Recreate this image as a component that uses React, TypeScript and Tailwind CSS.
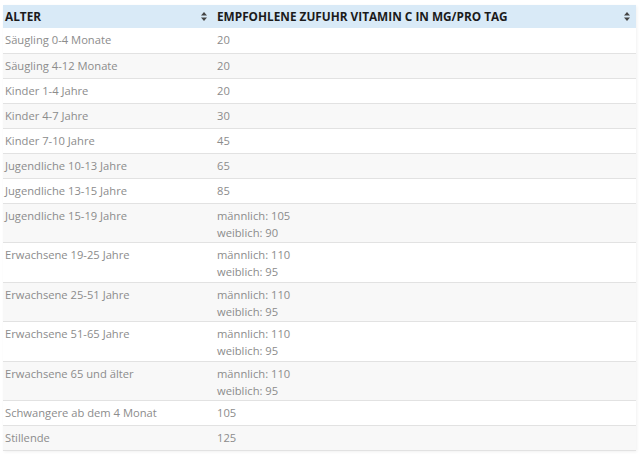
const rows: { age: string; value: string[] }[] = [
  { age: "Säugling 0-4 Monate", value: ["20"] },
  { age: "Säugling 4-12 Monate", value: ["20"] },
  { age: "Kinder 1-4 Jahre", value: ["20"] },
  { age: "Kinder 4-7 Jahre", value: ["30"] },
  { age: "Kinder 7-10 Jahre", value: ["45"] },
  { age: "Jugendliche 10-13 Jahre", value: ["65"] },
  { age: "Jugendliche 13-15 Jahre", value: ["85"] },
  { age: "Jugendliche 15-19 Jahre", value: ["männlich: 105", "weiblich: 90"] },
  { age: "Erwachsene 19-25 Jahre", value: ["männlich: 110", "weiblich: 95"] },
  { age: "Erwachsene 25-51 Jahre", value: ["männlich: 110", "weiblich: 95"] },
  { age: "Erwachsene 51-65 Jahre", value: ["männlich: 110", "weiblich: 95"] },
  { age: "Erwachsene 65 und älter", value: ["männlich: 110", "weiblich: 95"] },
  { age: "Schwangere ab dem 4 Monat", value: ["105"] },
  { age: "Stillende", value: ["125"] },
];

function SortIcon() {
  return (
    <svg width="6" height="9" viewBox="0 0 6 9" className="shrink-0">
      <path d="M3 0 L6 3.5 L0 3.5 Z" fill="#444" />
      <path d="M3 9 L6 5.5 L0 5.5 Z" fill="#444" />
    </svg>
  );
}

export default function App() {
  return (
    <div
      className="bg-white w-[640px] h-[457px] pt-[5px] pl-[3px] pr-[4px]"
      style={{ fontFamily: '"Open Sans", "Liberation Sans", sans-serif' }}
    >
      <table className="w-full border-collapse shadow-[1px_1px_3px_rgba(0,0,0,0.06)]">
        <thead>
          <tr className="bg-[#d9eaf7] h-[23px] text-[11.8px]">
            <th className="w-[210px] pl-[2px] pr-[6px] text-left font-bold text-[#1b1b1b] uppercase">
              <div className="flex items-center justify-between">
                <span>Alter</span>
                <SortIcon />
              </div>
            </th>
            <th className="pl-[4px] pr-[6px] text-left font-bold text-[#1b1b1b] uppercase">
              <div className="flex items-center justify-between">
                <span>Empfohlene Zufuhr Vitamin C in mg/pro Tag</span>
                <SortIcon />
              </div>
            </th>
          </tr>
        </thead>
        <tbody>
          {rows.map((r, i) => (
            <tr
              key={r.age}
              className={`border-b border-[#e2e2e2] text-[11.2px] text-[#8c8c8c] leading-[17px] ${
                i % 2 === 1 ? "bg-[#f8f8f8]" : "bg-white"
              } ${r.value.length > 1 ? "h-[39.5px]" : "h-[25px]"}`}
            >
              <td className="pl-[2px] align-top pt-[3px]">{r.age}</td>
              <td className="pl-[4px] align-top pt-[3px]">
                {r.value.map((v) => (
                  <div key={v}>{v}</div>
                ))}
              </td>
            </tr>
          ))}
        </tbody>
      </table>
    </div>
  );
}
